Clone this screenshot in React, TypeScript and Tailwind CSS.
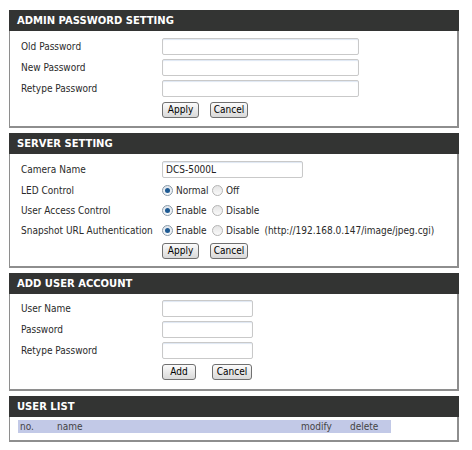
import React from "react";

const bodyFont = { fontFamily: "'DejaVu Sans Condensed', 'Liberation Sans', sans-serif" };

function Header({ title }: { title: string }) {
  return (
    <div
      className="h-[21px] bg-[#333433] text-white font-bold text-[10px] flex items-center pl-[8px]"
      style={{ fontFamily: "'DejaVu Sans', Verdana, sans-serif" }}
    >
      {title}
    </div>
  );
}

function Panel({ title, children, bodyClass }: { title: string; children: React.ReactNode; bodyClass: string }) {
  return (
    <div className="w-[450px]">
      <Header title={title} />
      <div className={"border-l border-r-2 border-b-2 border-[#8e8e8e] bg-white " + bodyClass}>{children}</div>
    </div>
  );
}

function Row({ label, children, h = "h-[21px]" }: { label: string; children?: React.ReactNode; h?: string }) {
  return (
    <div className={"flex items-center " + h}>
      <div className="w-[141px] shrink-0 text-[#2a2a2a]">{label}</div>
      <div className="flex items-center">{children}</div>
    </div>
  );
}

function Input({ w, value }: { w: string; value?: string }) {
  return (
    <div className={"h-[17px] border border-[#c9c9c9] rounded-[2px] bg-white flex items-center pl-[3px] text-[#222] shadow-[inset_0_1px_1px_rgba(200,215,235,0.6)] " + w}>
      {value}
    </div>
  );
}

function Btn({ label, w }: { label: string; w: string }) {
  return (
    <div
      className={
        "h-[16px] border border-[#707070] rounded-[3px] bg-gradient-to-b from-[#fbfbfb] to-[#d9d9d9] flex items-center justify-center text-black " +
        w
      }
    >
      {label}
    </div>
  );
}

function Radio({ checked }: { checked?: boolean }) {
  return checked ? (
    <div className="w-[11px] h-[11px] rounded-full border border-[#8a9aa8] bg-gradient-to-b from-[#dfe6ee] to-[#f6f8fa] flex items-center justify-center">
      <div className="w-[5px] h-[5px] rounded-full bg-[#1e5a93]" />
    </div>
  ) : (
    <div className="w-[11px] h-[11px] rounded-full border border-[#b4b4b4] bg-gradient-to-b from-[#e4e4e4] to-[#fafafa]" />
  );
}

function RadioPair({ a, b, extra }: { a: string; b: string; extra?: string }) {
  return (
    <div className="flex items-center text-[#2a2a2a]">
      <Radio checked />
      <span className="ml-[3px] w-[36px]">{a}</span>
      <Radio />
      <span className="ml-[3px]">{b}</span>
      {extra && <span className="ml-[5px]">{extra}</span>}
    </div>
  );
}

export default function App() {
  return (
    <div className="w-[472px] h-[450px] bg-white pl-[9px] pt-[10px] text-[10px] flex flex-col gap-[5px]" style={bodyFont}>
      <Panel title="ADMIN PASSWORD SETTING" bodyClass="pl-[11px] pt-[5px] pb-[6px]">
        <Row label="Old Password">
          <Input w="w-[197px]" />
        </Row>
        <Row label="New Password">
          <Input w="w-[197px]" />
        </Row>
        <Row label="Retype Password">
          <Input w="w-[197px]" />
        </Row>
        <Row label="">
          <div className="flex gap-[11px]">
            <Btn label="Apply" w="w-[37px]" />
            <Btn label="Cancel" w="w-[38px]" />
          </div>
        </Row>
      </Panel>

      <Panel title="SERVER SETTING" bodyClass="pl-[11px] pt-[5px] pb-[5px]">
        <Row label="Camera Name">
          <Input w="w-[141px]" value="DCS-5000L" />
        </Row>
        <Row label="LED Control" h="h-[20px]">
          <RadioPair a="Normal" b="Off" />
        </Row>
        <Row label="User Access Control" h="h-[20px]">
          <RadioPair a="Enable" b="Disable" />
        </Row>
        <Row label="Snapshot URL Authentication" h="h-[20px]">
          <RadioPair a="Enable" b="Disable" extra="(http://192.168.0.147/image/jpeg.cgi)" />
        </Row>
        <Row label="">
          <div className="flex gap-[11px]">
            <Btn label="Apply" w="w-[37px]" />
            <Btn label="Cancel" w="w-[38px]" />
          </div>
        </Row>
      </Panel>

      <Panel title="ADD USER ACCOUNT" bodyClass="pl-[11px] pt-[4px] pb-[7px]">
        <Row label="User Name">
          <Input w="w-[91px]" />
        </Row>
        <Row label="Password">
          <Input w="w-[91px]" />
        </Row>
        <Row label="Retype Password">
          <Input w="w-[91px]" />
        </Row>
        <Row label="">
          <div className="flex gap-[16px]">
            <Btn label="Add" w="w-[34px]" />
            <Btn label="Cancel" w="w-[40px]" />
          </div>
        </Row>
      </Panel>

      <Panel title="USER LIST" bodyClass="pl-[8px] pt-[3px] pb-[7px]">
        <div className="w-[373px] h-[13px] bg-[#c2c9e7] flex items-center text-[#444]">
          <span className="pl-[2px] w-[39px]">no.</span>
          <span className="w-[244px]">name</span>
          <span className="w-[49px]">modify</span>
          <span>delete</span>
        </div>
      </Panel>
    </div>
  );
}
